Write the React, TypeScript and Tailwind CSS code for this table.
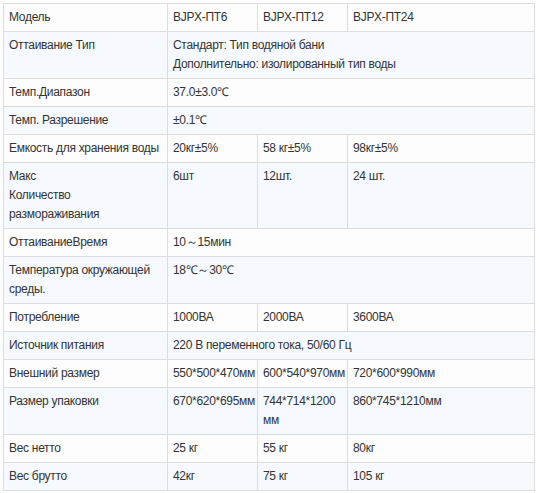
const rows: { label: string; cells: { text: string; span?: number }[] }[] = [
  { label: "Модель", cells: [{ text: "BJPX-ПТ6" }, { text: "BJPX-ПТ12" }, { text: "BJPX-ПТ24" }] },
  {
    label: "Оттаивание Тип",
    cells: [{ text: "Стандарт: Тип водяной бани\nДополнительно: изолированный тип воды", span: 3 }],
  },
  { label: "Темп.Диапазон", cells: [{ text: "37.0±3.0℃", span: 3 }] },
  { label: "Темп. Разрешение", cells: [{ text: "±0.1℃", span: 3 }] },
  { label: "Емкость для хранения воды", cells: [{ text: "20кг±5%" }, { text: "58 кг±5%" }, { text: "98кг±5%" }] },
  { label: "Макс\nКоличество\nразмораживания", cells: [{ text: "6шт" }, { text: "12шт." }, { text: "24 шт." }] },
  { label: "ОттаиваниеВремя", cells: [{ text: "10～15мин", span: 3 }] },
  { label: "Температура окружающей среды.", cells: [{ text: "18℃～30℃", span: 3 }] },
  { label: "Потребление", cells: [{ text: "1000ВА" }, { text: "2000ВА" }, { text: "3600ВА" }] },
  { label: "Источник питания", cells: [{ text: "220 В переменного тока, 50/60 Гц", span: 3 }] },
  {
    label: "Внешний размер",
    cells: [{ text: "550*500*470мм" }, { text: "600*540*970мм" }, { text: "720*600*990мм" }],
  },
  {
    label: "Размер упаковки",
    cells: [{ text: "670*620*695мм" }, { text: "744*714*1200 мм" }, { text: "860*745*1210мм" }],
  },
  { label: "Вес нетто", cells: [{ text: "25 кг" }, { text: "55 кг" }, { text: "80кг" }] },
  { label: "Вес брутто", cells: [{ text: "42кг" }, { text: "75 кг" }, { text: "105 кг" }] },
];

const cellCls = "border border-[#dddddd] pl-[5px] pr-0 pt-[4px] pb-[4px] align-top whitespace-pre-line";

export default function App() {
  return (
    <div
      className="min-h-screen bg-white p-[3px]"
      style={{ fontFamily: '"Liberation Sans", Arial, sans-serif' }}
    >
      <table className="table-fixed border-collapse w-[531px] text-[12px] leading-[19px] tracking-[-0.3px] text-[#333333]">
        <colgroup>
          <col className="w-[164px]" />
          <col className="w-[90px]" />
          <col className="w-[90px]" />
          <col className="w-[187px]" />
        </colgroup>
        <tbody>
          {rows.map((r, i) => (
            <tr key={i} className={i % 2 === 0 ? "bg-[#fdfdfd]" : "bg-[#f6faff]"}>
              <td className={cellCls}>{r.label}</td>
              {r.cells.map((c, j) => (
                <td key={j} colSpan={c.span} className={cellCls}>
                  {c.text}
                </td>
              ))}
            </tr>
          ))}
        </tbody>
      </table>
    </div>
  );
}
